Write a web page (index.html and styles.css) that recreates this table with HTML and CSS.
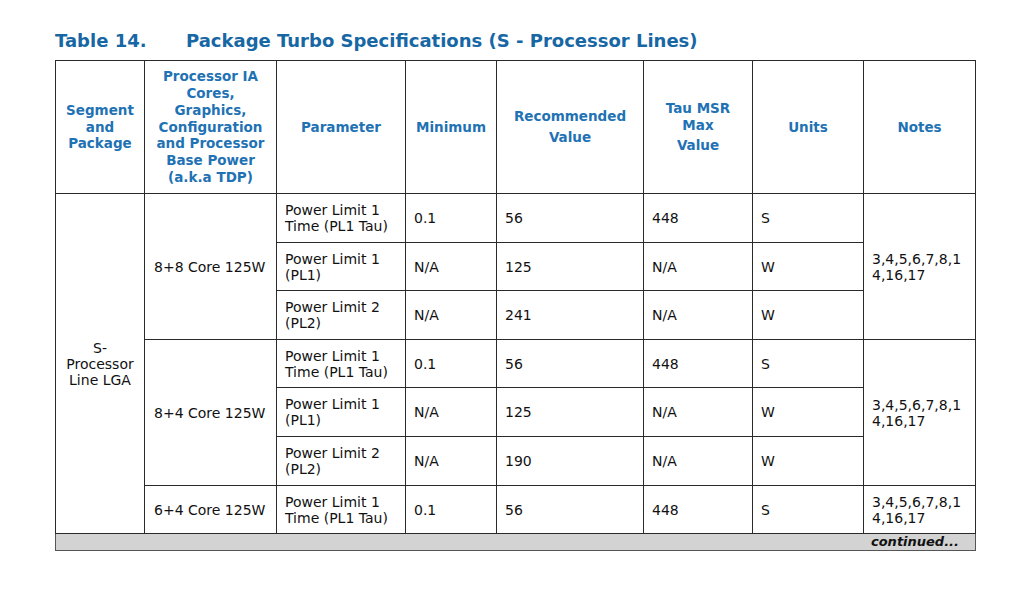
FILE: index.html
```html
<!DOCTYPE html>
<html>
<head>
<meta charset="utf-8">
<link rel="stylesheet" href="styles.css">
</head>
<body>
<div class="page">
  <h1 class="title"><span class="tnum">Table 14.</span><span class="tname">Package Turbo Specifications (S - Processor Lines)</span></h1>
  <table class="spec">
    <colgroup>
      <col class="c1"><col class="c2"><col class="c3"><col class="c4"><col class="c5"><col class="c6"><col class="c7"><col class="c8">
    </colgroup>
    <thead>
      <tr class="hrow">
        <th>Segment and Package</th>
        <th>Processor IA Cores, Graphics, Configuration and Processor Base Power (a.k.a TDP)</th>
        <th>Parameter</th>
        <th>Minimum</th>
        <th><div>Recommended</div><div class="sep">Value</div></th>
        <th><div>Tau MSR Max</div><div class="sep">Value</div></th>
        <th>Units</th>
        <th>Notes</th>
      </tr>
    </thead>
    <tbody>
      <tr class="r49">
        <td rowspan="7" class="seg">S-Processor Line LGA</td>
        <td rowspan="3" class="cfg">8+8 Core 125W</td>
        <td>Power Limit 1 Time (PL1 Tau)</td>
        <td>0.1</td><td>56</td><td>448</td><td>S</td>
        <td rowspan="3" class="notes">3,4,5,6,7,8,14,16,17</td>
      </tr>
      <tr class="r48">
        <td>Power Limit 1 (PL1)</td>
        <td>N/A</td><td>125</td><td>N/A</td><td>W</td>
      </tr>
      <tr class="r49">
        <td>Power Limit 2 (PL2)</td>
        <td>N/A</td><td>241</td><td>N/A</td><td>W</td>
      </tr>
      <tr class="r48">
        <td rowspan="3" class="cfg">8+4 Core 125W</td>
        <td>Power Limit 1 Time (PL1 Tau)</td>
        <td>0.1</td><td>56</td><td>448</td><td>S</td>
        <td rowspan="3" class="notes">3,4,5,6,7,8,14,16,17</td>
      </tr>
      <tr class="r49">
        <td>Power Limit 1 (PL1)</td>
        <td>N/A</td><td>125</td><td>N/A</td><td>W</td>
      </tr>
      <tr class="r49">
        <td>Power Limit 2 (PL2)</td>
        <td>N/A</td><td>190</td><td>N/A</td><td>W</td>
      </tr>
      <tr class="r48">
        <td class="cfg">6+4 Core 125W</td>
        <td>Power Limit 1 Time (PL1 Tau)</td>
        <td>0.1</td><td>56</td><td>448</td><td>S</td>
        <td class="notes">3,4,5,6,7,8,14,16,17</td>
      </tr>
      <tr class="cont">
        <td colspan="8">continued...</td>
      </tr>
    </tbody>
  </table>
</div>
</body>
</html>
```

FILE: styles.css
```css
html, body {
  margin: 0;
  padding: 0;
  background: #ffffff;
}

.page {
  padding: 30px 0 0 55px;
  font-family: "DejaVu Sans", Verdana, sans-serif;
  color: #111111;
}

.title {
  display: flex;
  margin: 0 0 8px 0;
  font-size: 18px;
  line-height: 22px;
  font-weight: bold;
  color: #1767a5;
}

.tnum {
  width: 131px;
}

.spec {
  border-collapse: collapse;
  table-layout: fixed;
  width: 920px;
  font-size: 14px;
  line-height: 16px;
}

.c1 { width: 89px; }
.c2 { width: 132px; }
.c3 { width: 129px; }
.c4 { width: 91px; }
.c5 { width: 147px; }
.c6 { width: 109px; }
.c7 { width: 111px; }
.c8 { width: 112px; }

.spec th,
.spec td {
  border: 1px solid #2a2a2a;
  vertical-align: middle;
  padding: 0 8px 0 8px;
}

.spec th {
  color: #1f72b4;
  font-weight: bold;
  font-size: 13.5px;
  text-align: center;
  line-height: 16.8px;
  padding: 0 4px;
}

.hrow {
  height: 133px;
}

.sep {
  margin-top: 4px;
}

.r49 { height: 49px; }
.r48 { height: 48px; }

.spec td {
  text-align: left;
}

.spec td.seg {
  text-align: center;
  padding: 0 4px;
}

.spec td.cfg {
  padding-left: 9px;
}

.spec td.notes {
  word-break: break-all;
}

.cont td {
  height: 16px;
  background: #d3d3d3;
  border: 1px solid #555555;
  text-align: right;
  font-weight: bold;
  font-style: italic;
  font-size: 13px;
  line-height: 16px;
  padding: 0 16px 0 8px;
}
```
